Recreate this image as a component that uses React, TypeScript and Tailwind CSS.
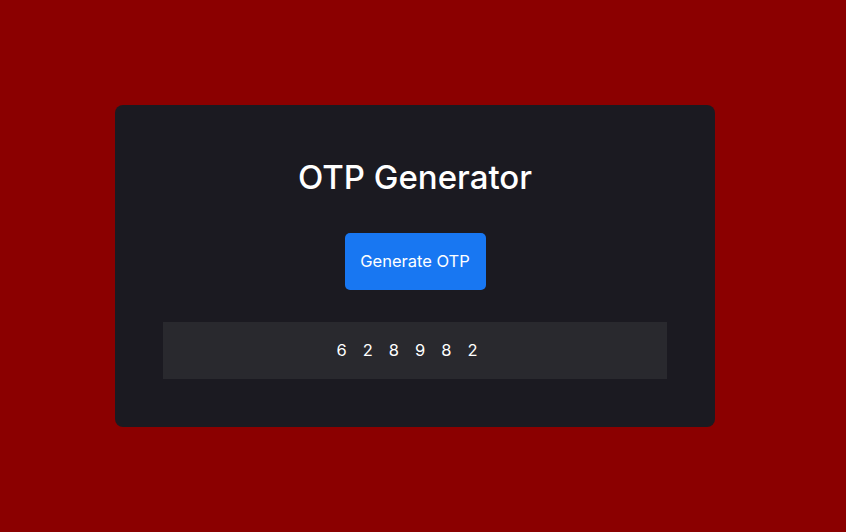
export default function App() {
  return (
    <div
      className="w-[846px] h-[532px] bg-[#8b0000] flex items-center pl-[115px]"
      style={{ fontFamily: 'Inter, "Noto Sans", sans-serif' }}
    >
      <div className="w-[600px] h-[322px] bg-[#1b1a21] rounded-lg px-12 pt-12 flex flex-col items-center">
        <h1 className="h-12 flex items-center text-[33px] font-medium text-white leading-none">OTP Generator</h1>
        <button className="mt-8 w-[141px] h-[57px] bg-[#1877f2] rounded-[5px] text-white text-[16.5px] flex items-center justify-center">
          Generate OTP
        </button>
        <div className="mt-8 w-full h-[57px] bg-[#29292e] flex items-center justify-center text-white text-[16.5px] tracking-[16px]">
          628982
        </div>
      </div>
    </div>
  );
}
